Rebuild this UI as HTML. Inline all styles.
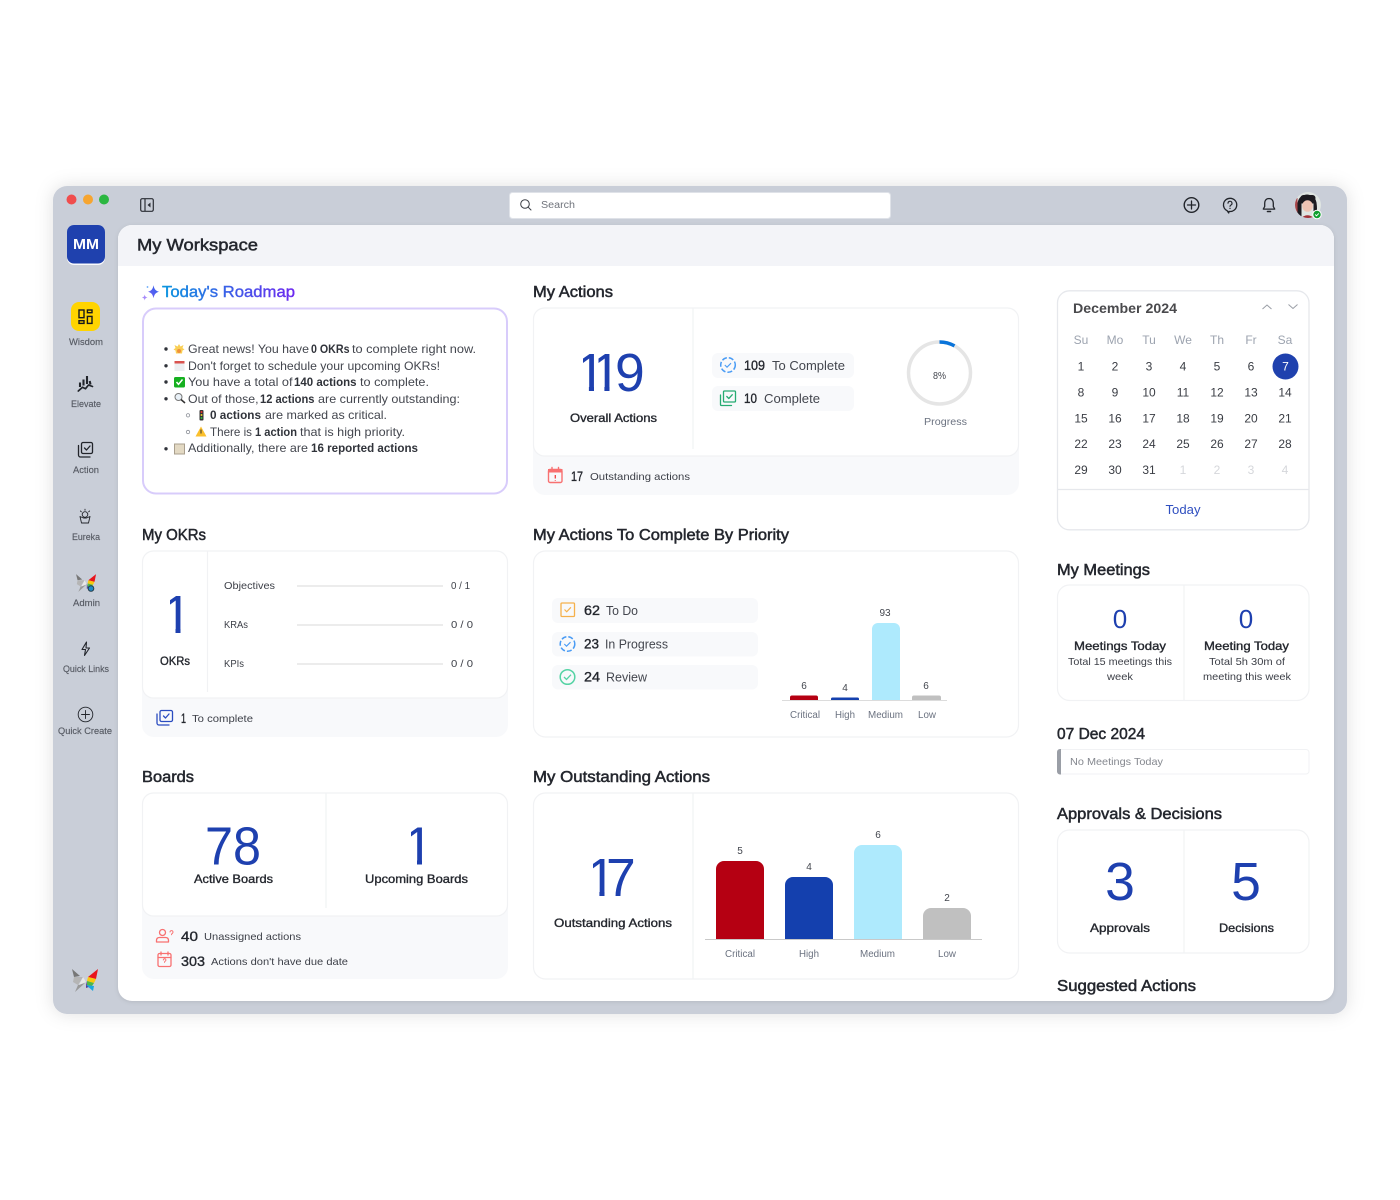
<!DOCTYPE html>
<html lang="en"><head><meta charset="utf-8"><title>My Workspace</title>
<style>
html,body{margin:0;padding:0;background:#fff;width:1400px;height:1200px;overflow:hidden}
svg{display:block}
text{font-family:"Liberation Sans",sans-serif;fill:#43464e;font-size:12px}
.m{stroke:currentColor;stroke-width:.35px;paint-order:stroke}
.h{font-size:15.5px;fill:#24272e;color:#24272e;stroke:#24272e;stroke-width:.5px}
.s{font-size:10.5px;fill:#3c3f47}
.b{font-weight:700;fill:#30333a}
.side{font-size:9.5px;fill:#565a63;stroke:#565a63;stroke-width:.15px}
.big{fill:#1e40af;font-size:53.5px}
.n{font-size:13.5px;fill:#24272e;stroke:#24272e;stroke-width:.35px}
.g{font-size:10px;fill:#6b7280}
.c{font-size:12px;text-anchor:middle;fill:#3a3d44}
.w{font-size:12px;text-anchor:middle;fill:#9ca3af}
.card{fill:#fff;stroke:#f1f2f4;stroke-width:1.2}
.foot{fill:#f8f9fb}
.pill{fill:#f8f9fb}
.ic{fill:none;stroke:#22252b;stroke-width:1.3;stroke-linecap:round;stroke-linejoin:round}
</style></head><body>
<svg width="1400" height="1200" viewBox="0 0 1400 1200" xmlns="http://www.w3.org/2000/svg">
<defs>
<filter id="sh" x="-5%" y="-5%" width="110%" height="110%"><feDropShadow dx="0" dy="0" stdDeviation="9" flood-color="#000" flood-opacity=".12"/></filter>
<filter id="sh2" x="-3%" y="-3%" width="106%" height="106%"><feDropShadow dx="0" dy="1" stdDeviation="2" flood-color="#000" flood-opacity=".1"/></filter>
<linearGradient id="gr" gradientUnits="userSpaceOnUse" x1="162" y1="0" x2="295" y2="0"><stop offset="0" stop-color="#0a96df"/><stop offset="1" stop-color="#6d28f0"/></linearGradient>
<linearGradient id="gs" gradientUnits="userSpaceOnUse" x1="142" y1="300" x2="160" y2="285"><stop offset="0" stop-color="#8b5cf6"/><stop offset="1" stop-color="#2563eb"/></linearGradient>
<clipPath id="panel"><rect x="118" y="225" width="1216" height="776" rx="14"/></clipPath>
<clipPath id="av"><circle cx="1308" cy="205" r="13"/></clipPath>
<g id="logo">
<polygon points="72,969 80,976 74,977" fill="#777"/><polygon points="74,977 83,977 78,985 73,982" fill="#b5b5b5"/><polygon points="78,985 85,983 75,992" fill="#999"/><polygon points="83,977 86,982 79,985" fill="#e8e8e8"/>
<polygon points="98,969 88,977 96,979" fill="#e8141c"/><polygon points="88,977 96,979 94,983 87,981" fill="#f9c80e"/><polygon points="87,981 94,983 92,986 87,985" fill="#4fb848"/><polygon points="86,981 87,985 92,986 86,988" fill="#5b3a98"/><polygon points="86,985 94,986 93,991" fill="#1aa7e0"/>
</g>
</defs>
<rect x="53" y="186" width="1294" height="828" rx="14" fill="#c9ced8" filter="url(#sh)"/>
<circle cx="71.5" cy="199.5" r="5" fill="#f04d4d"/><circle cx="88" cy="199.5" r="5" fill="#f6a530"/><circle cx="104" cy="199.5" r="5" fill="#2bb741"/>
<rect x="140.7" y="198.7" width="12.6" height="12.6" rx="1.5" fill="none" stroke="#2b2e35" stroke-width="1.2"/><line x1="145" y1="199" x2="145" y2="211" stroke="#2b2e35" stroke-width="1.2"/><polygon points="150.5,202.5 147.5,205 150.5,207.5" fill="#2b2e35"/>
<rect x="509.5" y="192.5" width="381" height="26" rx="3" fill="#fff" stroke="#dfe2e8"/>
<circle cx="525" cy="204" r="4.3" class="ic" style="stroke-width:1;stroke:#3a3d44"/><line x1="528.3" y1="207.3" x2="531" y2="210" class="ic" style="stroke-width:1;stroke:#3a3d44"/>
<text x="541" y="208" textLength="34" lengthAdjust="spacingAndGlyphs" style="font-size:10px;fill:#70747c">Search</text>
<circle cx="1191.5" cy="205" r="7.3" class="ic" style="stroke-width:1.4"/><path d="M1191.5 201v8M1187.500 205h8" class="ic"/>
<path d="M1230 198.3a6.6 6.6 0 1 1-1 13.1l-.3 1.6-1.4-2.1a6.6 6.6 0 0 1 2.7-12.6z" class="ic"/><path d="M1228 203.3a2 2 0 1 1 2.8 1.8c-.6.3-.8.7-.8 1.3" class="ic" style="stroke-width:1.1"/><circle cx="1230" cy="208.4" r=".7" fill="#22252b"/>
<path d="M1269 198.5c-2.7 0-4.3 2-4.3 4.6v3.4l-1.4 2.6h11.4l-1.4-2.6v-3.4c0-2.6-1.6-4.6-4.3-4.6z" class="ic"/><path d="M1267.5 211.5h3" class="ic" style="stroke-width:1.6"/>
<g clip-path="url(#av)"><rect x="1295" y="192" width="26" height="26" fill="#dfe5e2"/><path d="M1298 217q-2-8-.5-14 1.500-8 9.500-8.500 8 .5 9.500 8 1 7 0 12l-3 1v-12h-12v13z" fill="#1c1a20"/><rect x="1300.500" y="195" width="15" height="6" rx="3" fill="#1c1a20"/><ellipse cx="1307.500" cy="206" rx="5.300" ry="5.800" fill="#efc4b4"/><path d="M1300 219q7.500-7.500 15 0z" fill="#a23238"/><rect x="1295" y="198" width="2.500" height="17" fill="#a8464a"/></g>
<circle cx="1317" cy="214.5" r="4.2" fill="#0fa02f" stroke="#fff" stroke-width="1"/><path d="M1315.2 214.5l1.3 1.3 2.3-2.4" fill="none" stroke="#fff" stroke-width=".9"/>
<rect x="67" y="225" width="38" height="40" rx="7" fill="#fff" opacity=".9"/><rect x="67" y="225" width="38" height="38.5" rx="7" fill="#1f41ae"/>
<text x="73" y="249" textLength="26" lengthAdjust="spacingAndGlyphs" font-weight="700" style="font-size:15px;fill:#fff">MM</text>
<rect x="71" y="302" width="29" height="29" rx="8" fill="#ffd400"/>
<g fill="none" stroke="#16181c" stroke-width="1.400"><rect x="79" y="310" width="5" height="7.700"/><rect x="87.400" y="310" width="4.600" height="2.700"/><rect x="79" y="320.700" width="5" height="2.700"/><rect x="87.400" y="316.400" width="4.600" height="7"/></g>
<text x="69" y="345" textLength="34" lengthAdjust="spacingAndGlyphs" class="side">Wisdom</text>
<path d="M80 387v-4.500M83.500 385.500v-6M87 384v-8M90.500 384.500l-.8-3.500" class="ic" style="stroke-width:2.100;stroke-linecap:butt"/><path d="M78.300 391l4.200-3.800 3 1.500 3-3.700 4 1.500" class="ic" style="stroke-width:1.700"/>
<text x="71" y="407" textLength="30" lengthAdjust="spacingAndGlyphs" class="side">Elevate</text>
<rect x="81.5" y="442.5" width="11" height="11" rx="1.5" class="ic"/><path d="M78.5 445.5v9.5a2 2 0 0 0 2 2h9.5" class="ic"/><path d="M84.5 448l2 2 3.5-4" class="ic"/>
<text x="73" y="473" textLength="26" lengthAdjust="spacingAndGlyphs" class="side">Action</text>
<circle cx="85" cy="514.500" r="2.800" class="ic" style="stroke-width:.9"/><path d="M80 516.500l1.500 6.500h7l1.500-6.500-3.500 1.500h-3z" class="ic" style="stroke-width:.9"/><path d="M85 509.200v1M80.500 511l.8.8M89.500 511l-.8.8" class="ic" style="stroke-width:.9"/>
<text x="72" y="540" textLength="28" lengthAdjust="spacingAndGlyphs" class="side">Eureka</text>
<use href="#logo" transform="translate(20.600 -172) scale(.77)"/><circle cx="91" cy="588.500" r="2.800" fill="#1d8ac8" stroke="#263e4a" stroke-width="1"/>
<text x="73" y="606" textLength="27" lengthAdjust="spacingAndGlyphs" class="side">Admin</text>
<path d="M86.500 642l-4.500 7.500h3.500l-1 6 5-7.500h-3.500z" class="ic" style="stroke-width:1.100"/>
<text x="63" y="672" textLength="46" lengthAdjust="spacingAndGlyphs" class="side">Quick Links</text>
<circle cx="85.5" cy="714.5" r="7.3" class="ic" style="stroke-width:.9"/><path d="M85.5 710.5v8M81.5 714.5h8" class="ic" style="stroke-width:.9"/>
<text x="58" y="734" textLength="54" lengthAdjust="spacingAndGlyphs" class="side">Quick Create</text>
<use href="#logo"/>

<rect x="118" y="225" width="1216" height="776" rx="14" fill="#fff" filter="url(#sh2)"/>
<g clip-path="url(#panel)">
<rect x="118" y="225" width="1216" height="41" fill="#f3f4f8"/>
<text x="137" y="250.5" textLength="121" lengthAdjust="spacingAndGlyphs" class="h" style="font-size:17px">My Workspace</text>

<path transform="translate(1.500 .800) " d="M152 284.500c.8 4 2 5.500 5.500 6.500-3.500 1-4.700 2.500-5.500 6.500-.8-4-2-5.500-5.500-6.500 3.500-1 4.700-2.500 5.500-6.500z" fill="url(#gs)"/><circle cx="147.500" cy="287" r=".9" fill="#60a5fa"/><path d="M144.700 294.500c.4 2 .9 2.500 2.800 3-1.900.5-2.400 1-2.800 3-.4-2-.9-2.500-2.800-3 1.900-.5 2.400-1 2.800-3z" fill="#a78bfa"/>
<text x="162" y="297" textLength="133" lengthAdjust="spacingAndGlyphs" style="font-size:16px;fill:url(#gr);stroke:url(#gr);stroke-width:.4px">Today's Roadmap</text>
<rect x="143" y="308.500" width="364" height="185" rx="13" fill="#fff" stroke="#d8ccfb" stroke-width="2"/>
<g fill="#30333a"><circle cx="166" cy="349" r="1.700"/><circle cx="166" cy="365.800" r="1.700"/><circle cx="166" cy="382" r="1.700"/><circle cx="166" cy="398.800" r="1.700"/><circle cx="166" cy="448.800" r="1.700"/></g>
<circle cx="188" cy="415.300" r="1.700" fill="none" stroke="#8b8f97" stroke-width=".8"/><circle cx="188" cy="432" r="1.700" fill="none" stroke="#8b8f97" stroke-width=".8"/>
<path d="M179 344l1.500 2.500 3-1.500-1 3 2 1.500-2 1-.5 3h-6l-.5-3-2-1 2-1.500-1-3 3 1.500z" fill="#f9cf55"/><circle cx="179" cy="351" r="2" fill="#f0913a"/>
<rect x="174.500" y="361" width="10" height="10" fill="#eceef1"/><rect x="174.500" y="361" width="10" height="2.500" fill="#d9534f"/>
<rect x="174" y="377" width="11" height="10.500" rx="1.500" fill="#16b020"/><path d="M176.500 382l2 2.300 4-4.800" fill="none" stroke="#fff" stroke-width="1.500"/>
<circle cx="178.500" cy="397" r="3.500" fill="#e9f1f8" stroke="#777" stroke-width="1"/><line x1="181" y1="399.500" x2="185" y2="403" stroke="#333" stroke-width="1.500"/>
<rect x="199.500" y="410" width="4" height="10.500" rx="1" fill="#333"/><circle cx="201.500" cy="412" r="1" fill="#e33"/><circle cx="201.500" cy="415" r="1" fill="#ec3"/><circle cx="201.500" cy="418" r="1" fill="#3b4"/>
<polygon points="201,426.500 206.500,436.500 195.500,436.500" fill="#fbc02d"/><rect x="200.500" y="429.500" width="1" height="4" fill="#333"/>
<rect x="174.500" y="444" width="10" height="10" fill="#e3d9c3" stroke="#a99f8e"/>
<text x="188" y="353" textLength="121" lengthAdjust="spacingAndGlyphs">Great news! You have</text><text x="311" y="353" textLength="38.500" lengthAdjust="spacingAndGlyphs" class="b">0 OKRs</text><text x="352" y="353" textLength="124" lengthAdjust="spacingAndGlyphs">to complete right now.</text>
<text x="188" y="370" textLength="252" lengthAdjust="spacingAndGlyphs">Don't forget to schedule your upcoming OKRs!</text>
<text x="188" y="386" textLength="104.500" lengthAdjust="spacingAndGlyphs">You have a total of</text><text x="294" y="386" textLength="62.500" lengthAdjust="spacingAndGlyphs" class="b">140 actions</text><text x="360" y="386" textLength="69" lengthAdjust="spacingAndGlyphs">to complete.</text>
<text x="188" y="403" textLength="70.500" lengthAdjust="spacingAndGlyphs">Out of those,</text><text x="260" y="403" textLength="54.500" lengthAdjust="spacingAndGlyphs" class="b">12 actions</text><text x="318" y="403" textLength="142" lengthAdjust="spacingAndGlyphs">are currently outstanding:</text>
<text x="210" y="419" textLength="51" lengthAdjust="spacingAndGlyphs" class="b">0 actions</text><text x="265" y="419" textLength="122" lengthAdjust="spacingAndGlyphs">are marked as critical.</text>
<text x="210" y="436" textLength="42" lengthAdjust="spacingAndGlyphs">There is</text><text x="255" y="436" textLength="42" lengthAdjust="spacingAndGlyphs" class="b">1 action</text><text x="300" y="436" textLength="105" lengthAdjust="spacingAndGlyphs">that is high priority.</text>
<text x="188" y="452" textLength="120" lengthAdjust="spacingAndGlyphs">Additionally, there are</text><text x="311" y="452" textLength="107" lengthAdjust="spacingAndGlyphs" class="b">16 reported actions</text>

<text x="142" y="540" textLength="64" lengthAdjust="spacingAndGlyphs" class="h">My OKRs</text>
<rect x="142" y="551" width="366" height="186" rx="12" class="foot"/><rect x="142.500" y="551" width="365" height="147" rx="11" class="card"/>
<line x1="207.500" y1="551" x2="207.500" y2="692" stroke="#f1f2f4" stroke-width="1.200"/>
<text x="162.200" y="633" class="big">1</text><rect x="160" y="590" width="10" height="44" fill="#fff"/><rect x="165" y="628.400" width="10.500" height="5.600" fill="#fff"/><rect x="180.500" y="628.400" width="10.500" height="5.600" fill="#fff"/>
<text x="160" y="665" textLength="30" lengthAdjust="spacingAndGlyphs" class="m" style="color:#24272e;fill:#24272e">OKRs</text>
<text x="224" y="589" textLength="51" lengthAdjust="spacingAndGlyphs" class="s">Objectives</text><line x1="297" y1="586" x2="443" y2="586" stroke="#e5e5e5" stroke-width="1.500"/><text x="451" y="589" textLength="19" lengthAdjust="spacingAndGlyphs" class="s">0 / 1</text>
<text x="224" y="628" textLength="24" lengthAdjust="spacingAndGlyphs" class="s">KRAs</text><line x1="297" y1="625" x2="443" y2="625" stroke="#e5e5e5" stroke-width="1.500"/><text x="451" y="628" textLength="22" lengthAdjust="spacingAndGlyphs" class="s">0 / 0</text>
<text x="224" y="667" textLength="20" lengthAdjust="spacingAndGlyphs" class="s">KPIs</text><line x1="297" y1="664" x2="443" y2="664" stroke="#e5e5e5" stroke-width="1.500"/><text x="451" y="667" textLength="22" lengthAdjust="spacingAndGlyphs" class="s">0 / 0</text>
<g fill="none" stroke="#2a4cc0" stroke-width="1.300" stroke-linejoin="round" stroke-linecap="round"><rect x="160" y="710.500" width="12.500" height="11" rx="1.500"/><path d="M157 714v9a2 2 0 0 0 2 2h10"/><path d="M163.500 716l2 2 3.500-4"/></g>
<text x="181" y="723" textLength="5" lengthAdjust="spacingAndGlyphs" class="n">1</text><text x="192" y="722" textLength="61" lengthAdjust="spacingAndGlyphs" class="s">To complete</text>

<text x="142" y="782" textLength="52" lengthAdjust="spacingAndGlyphs" class="h">Boards</text>
<rect x="142" y="793" width="366" height="186" rx="12" class="foot"/><rect x="142.500" y="793" width="365" height="123" rx="11" class="card"/>
<line x1="326" y1="793" x2="326" y2="908" stroke="#f1f2f4" stroke-width="1.200"/>
<text x="205" y="864.500" textLength="56" lengthAdjust="spacingAndGlyphs" class="big">78</text>
<text x="194" y="883" textLength="79" lengthAdjust="spacingAndGlyphs" class="m" style="color:#24272e;fill:#24272e">Active Boards</text>
<text x="403.700" y="864.500" class="big">1</text><rect x="401" y="822" width="10" height="44" fill="#fff"/><rect x="406.500" y="859.900" width="10.500" height="5.600" fill="#fff"/><rect x="422" y="859.900" width="10.500" height="5.600" fill="#fff"/>
<text x="365" y="883" textLength="103" lengthAdjust="spacingAndGlyphs" class="m" style="color:#24272e;fill:#24272e">Upcoming Boards</text>
<g fill="none" stroke="#f87171" stroke-width="1.300" stroke-linecap="round" stroke-linejoin="round"><circle cx="162.500" cy="932.500" r="3"/><path d="M156.500 942v-1.500q0-3 3-3h6q3 0 3 3v1.500z"/><path d="M170 932a1.500 1.500 0 1 1 2.500 1.200q-1 .6-1 1.600" stroke-width="1"/><rect x="158" y="953.500" width="13" height="13" rx="1.500"/><path d="M158 957.500h13M161 952v3M168 952v3"/><path d="M163.300 960a1.300 1.300 0 1 1 2 1.100q-.8.400-.8 1.300" stroke-width="1"/></g>
<text x="181" y="941" textLength="17" lengthAdjust="spacingAndGlyphs" class="n">40</text><text x="204" y="940" textLength="97" lengthAdjust="spacingAndGlyphs" class="s">Unassigned actions</text>
<text x="181" y="966" textLength="24" lengthAdjust="spacingAndGlyphs" class="n">303</text><text x="211" y="965" textLength="137" lengthAdjust="spacingAndGlyphs" class="s">Actions don't have due date</text>

<text x="533" y="297" textLength="80" lengthAdjust="spacingAndGlyphs" class="h">My Actions</text>
<rect x="533" y="308" width="486" height="187" rx="12" class="foot"/><rect x="533.500" y="308" width="485" height="148" rx="11" class="card"/>
<line x1="693" y1="308" x2="693" y2="449" stroke="#f1f2f4" stroke-width="1.200"/>
<text x="575.700" y="391" class="big">1</text><rect x="573" y="348" width="10" height="44" fill="#fff"/><rect x="578.500" y="386.400" width="10.400" height="5.600" fill="#fff"/><rect x="594" y="386.400" width="10.400" height="5.600" fill="#fff"/>
<text x="591.200" y="391" class="big">1</text><rect x="594" y="348" width="4.500" height="44" fill="#fff"/><rect x="594" y="386.400" width="10.400" height="5.600" fill="#fff"/><rect x="609.500" y="386.400" width="10.400" height="5.600" fill="#fff"/>
<text x="615" y="391" class="big">9</text>
<text x="570" y="422" textLength="87" lengthAdjust="spacingAndGlyphs" class="m" style="color:#24272e;fill:#24272e">Overall Actions</text>
<rect x="712" y="353" width="142" height="25" rx="6" class="pill"/><rect x="712" y="386" width="142" height="25" rx="6" class="pill"/>
<circle cx="728" cy="365" r="7.300" fill="none" stroke="#4a9cf5" stroke-width="1.500" stroke-dasharray="5 2"/><path d="M724.800 365l2.200 2.200 4-4" fill="none" stroke="#4a9cf5" stroke-width="1.100"/>
<g fill="none" stroke="#26ab72" stroke-width="1.300" stroke-linecap="round" stroke-linejoin="round"><rect x="723.500" y="391" width="12" height="11" rx="1"/><path d="M720.500 395v9.500a1 1 0 0 0 1 1h10"/><path d="M726.800 396.500l2 2 3.500-3.800"/></g>
<text x="744" y="370" textLength="21" lengthAdjust="spacingAndGlyphs" class="n">109</text><text x="772" y="370" textLength="73" lengthAdjust="spacingAndGlyphs" style="font-size:12.500px">To Complete</text>
<text x="744" y="403" textLength="13" lengthAdjust="spacingAndGlyphs" class="n">10</text><text x="764" y="403" textLength="56" lengthAdjust="spacingAndGlyphs" style="font-size:12.500px">Complete</text>
<circle cx="939.500" cy="373" r="31" fill="none" stroke="#e5e5e5" stroke-width="3.500"/><path d="M939.500 342a31 31 0 0 1 15 3.900" fill="none" stroke="#0a74da" stroke-width="3.500"/>
<text x="933" y="379" textLength="13" lengthAdjust="spacingAndGlyphs" style="font-size:10px">8%</text><text x="924" y="425" textLength="43" lengthAdjust="spacingAndGlyphs" class="g">Progress</text>
<g fill="none" stroke="#f87171" stroke-width="1.400" stroke-linecap="round"><rect x="548.500" y="469.500" width="13.500" height="13" rx="1.500"/><path d="M552 467.500v3M558.500 467.500v3"/></g><rect x="548" y="469" width="14.500" height="3.500" fill="#f87171"/><path d="M555.300 475v3.500M555.300 480v.6" stroke="#ef4444" stroke-width="1.300" fill="none"/>
<text x="571" y="481" textLength="12" lengthAdjust="spacingAndGlyphs" class="n">17</text><text x="590" y="480" textLength="100" lengthAdjust="spacingAndGlyphs" class="s">Outstanding actions</text>

<text x="533" y="540" textLength="256" lengthAdjust="spacingAndGlyphs" class="h">My Actions To Complete By Priority</text>
<rect x="533.500" y="551" width="485" height="186" rx="12" class="card"/>
<rect x="552" y="598" width="206" height="25" rx="6" class="pill"/><rect x="552" y="632" width="206" height="24.500" rx="6" class="pill"/><rect x="552" y="665" width="206" height="24.500" rx="6" class="pill"/>
<rect x="561" y="603" width="13.500" height="13.500" rx="1" fill="none" stroke="#f5b14c" stroke-width="1.300"/><path d="M564.500 609.500l2.200 2.300 4.200-4.500" fill="none" stroke="#f5b14c" stroke-width="1.200"/>
<circle cx="567.500" cy="644" r="7.300" fill="none" stroke="#4a9cf5" stroke-width="1.500" stroke-dasharray="5 2"/><path d="M564.300 644l2.200 2.200 4-4" fill="none" stroke="#4a9cf5" stroke-width="1.100"/>
<circle cx="567.500" cy="677" r="7.300" fill="none" stroke="#55d3a4" stroke-width="1.500"/><path d="M564 677l2.500 2.500 4.500-4.800" fill="none" stroke="#55d3a4" stroke-width="1.300"/>
<text x="584" y="615" textLength="16" lengthAdjust="spacingAndGlyphs" class="n">62</text><text x="606" y="615" textLength="32" lengthAdjust="spacingAndGlyphs" style="font-size:12.500px">To Do</text>
<text x="584" y="648.500" textLength="15" lengthAdjust="spacingAndGlyphs" class="n">23</text><text x="605" y="648.500" textLength="63" lengthAdjust="spacingAndGlyphs" style="font-size:12.500px">In Progress</text>
<text x="584" y="681.500" textLength="16" lengthAdjust="spacingAndGlyphs" class="n">24</text><text x="606" y="681.500" textLength="41" lengthAdjust="spacingAndGlyphs" style="font-size:12.500px">Review</text>
<path d="M790 700v-2.500a2 2 0 0 1 2-2h24a2 2 0 0 1 2 2v2.500z" fill="#b50012"/><path d="M831 700v-1a1.500 1.500 0 0 1 1.500-1.500h25a1.500 1.500 0 0 1 1.500 1.500v1z" fill="#1440ae"/><path d="M872 700v-71a6 6 0 0 1 6-6h16a6 6 0 0 1 6 6v71z" fill="#aeeafd"/><path d="M912 700v-2.500a2 2 0 0 1 2-2h25a2 2 0 0 1 2 2v2.500z" fill="#c0c0c0"/>
<line x1="782" y1="700.500" x2="947" y2="700.500" stroke="#dcdcdc"/>
<g style="font-size:10px" text-anchor="middle"><text x="804" y="689" style="font-size:10px">6</text><text x="845" y="691" style="font-size:10px">4</text><text x="885" y="616" style="font-size:10px">93</text><text x="926" y="689" style="font-size:10px">6</text></g>
<text x="790" y="718" textLength="30" lengthAdjust="spacingAndGlyphs" class="g">Critical</text><text x="835" y="718" textLength="20" lengthAdjust="spacingAndGlyphs" class="g">High</text><text x="868" y="718" textLength="35" lengthAdjust="spacingAndGlyphs" class="g">Medium</text><text x="918" y="718" textLength="18" lengthAdjust="spacingAndGlyphs" class="g">Low</text>

<text x="533" y="782" textLength="177" lengthAdjust="spacingAndGlyphs" class="h">My Outstanding Actions</text>
<rect x="533.500" y="793" width="485" height="186" rx="12" class="card"/>
<line x1="693" y1="793" x2="693" y2="979" stroke="#f1f2f4" stroke-width="1.200"/>
<text x="586.200" y="896" class="big">1</text><rect x="584" y="853" width="9" height="44" fill="#fff"/><rect x="589" y="891.400" width="10.400" height="5.600" fill="#fff"/><rect x="604.500" y="891.400" width="10.400" height="5.600" fill="#fff"/>
<text x="606" y="896" class="big">7</text>
<text x="554" y="927" textLength="118" lengthAdjust="spacingAndGlyphs" class="m" style="color:#24272e;fill:#24272e">Outstanding Actions</text>
<path d="M716 939v-70a8 8 0 0 1 8-8h32a8 8 0 0 1 8 8v70z" fill="#b50012"/><path d="M785 939v-54a8 8 0 0 1 8-8h32a8 8 0 0 1 8 8v54z" fill="#1440ae"/><path d="M854 939v-86a8 8 0 0 1 8-8h32a8 8 0 0 1 8 8v86z" fill="#aeeafd"/><path d="M923 939v-23a8 8 0 0 1 8-8h32a8 8 0 0 1 8 8v23z" fill="#c0c0c0"/>
<line x1="705" y1="939.500" x2="982" y2="939.500" stroke="#c9c9c9"/>
<g text-anchor="middle"><text x="740" y="854" style="font-size:10px">5</text><text x="809" y="870" style="font-size:10px">4</text><text x="878" y="838" style="font-size:10px">6</text><text x="947" y="901" style="font-size:10px">2</text></g>
<text x="725" y="957" textLength="30" lengthAdjust="spacingAndGlyphs" class="g">Critical</text><text x="799" y="957" textLength="20" lengthAdjust="spacingAndGlyphs" class="g">High</text><text x="860" y="957" textLength="35" lengthAdjust="spacingAndGlyphs" class="g">Medium</text><text x="938" y="957" textLength="18" lengthAdjust="spacingAndGlyphs" class="g">Low</text>

<rect x="1057.500" y="290.800" width="251.500" height="239" rx="12" fill="#fff" stroke="#e6e8ec" stroke-width="1.300"/>
<text x="1073" y="313" textLength="104" lengthAdjust="spacingAndGlyphs" font-weight="700" style="font-size:14px;fill:#4a4a4d">December 2024</text>
<path d="M1262.500 309l4.500-4 4.500 4M1288.500 304.500l4.500 4 4.500-4" fill="none" stroke="#9a9ea6" stroke-width="1"/>
<g>
<text class="w" x="1081" y="344">Su</text><text class="w" x="1115" y="344">Mo</text><text class="w" x="1149" y="344">Tu</text><text class="w" x="1183" y="344">We</text><text class="w" x="1217" y="344">Th</text><text class="w" x="1251" y="344">Fr</text><text class="w" x="1285" y="344">Sa</text>
<circle cx="1285.500" cy="366.500" r="13" fill="#1f41ae"/>
<text class="c" x="1081" y="370.500">1</text><text class="c" x="1115" y="370.500">2</text><text class="c" x="1149" y="370.500">3</text><text class="c" x="1183" y="370.500">4</text><text class="c" x="1217" y="370.500">5</text><text class="c" x="1251" y="370.500">6</text><text class="c" x="1285.500" y="370.500" style="fill:#fff">7</text>
<text class="c" x="1081" y="396.500">8</text><text class="c" x="1115" y="396.500">9</text><text class="c" x="1149" y="396.500">10</text><text class="c" x="1183" y="396.500">11</text><text class="c" x="1217" y="396.500">12</text><text class="c" x="1251" y="396.500">13</text><text class="c" x="1285" y="396.500">14</text>
<text class="c" x="1081" y="422.500">15</text><text class="c" x="1115" y="422.500">16</text><text class="c" x="1149" y="422.500">17</text><text class="c" x="1183" y="422.500">18</text><text class="c" x="1217" y="422.500">19</text><text class="c" x="1251" y="422.500">20</text><text class="c" x="1285" y="422.500">21</text>
<text class="c" x="1081" y="448">22</text><text class="c" x="1115" y="448">23</text><text class="c" x="1149" y="448">24</text><text class="c" x="1183" y="448">25</text><text class="c" x="1217" y="448">26</text><text class="c" x="1251" y="448">27</text><text class="c" x="1285" y="448">28</text>
<text class="c" x="1081" y="474">29</text><text class="c" x="1115" y="474">30</text><text class="c" x="1149" y="474">31</text><text class="c" x="1183" y="474" style="fill:#d5d7db">1</text><text class="c" x="1217" y="474" style="fill:#d5d7db">2</text><text class="c" x="1251" y="474" style="fill:#d5d7db">3</text><text class="c" x="1285" y="474" style="fill:#d5d7db">4</text>
</g>
<line x1="1057.500" y1="489.500" x2="1309" y2="489.500" stroke="#e6e8ec" stroke-width="1.200"/>
<text x="1165.500" y="514" textLength="35" lengthAdjust="spacingAndGlyphs" style="font-size:12.500px;fill:#2f4fc0">Today</text>

<text x="1057" y="575" textLength="93" lengthAdjust="spacingAndGlyphs" class="h">My Meetings</text>
<rect x="1057.500" y="585" width="251.500" height="115.500" rx="12" class="card"/><line x1="1184" y1="585" x2="1184" y2="700" stroke="#f1f2f4" stroke-width="1.200"/>
<text x="1120" y="628" text-anchor="middle" class="big" style="font-size:26px">0</text><text x="1246" y="628" text-anchor="middle" class="big" style="font-size:26px">0</text>
<text x="1074" y="650" textLength="92" lengthAdjust="spacingAndGlyphs" class="m" style="color:#24272e;fill:#24272e">Meetings Today</text><text x="1068" y="665" textLength="104" lengthAdjust="spacingAndGlyphs" class="s">Total 15 meetings this</text><text x="1107" y="680" textLength="26" lengthAdjust="spacingAndGlyphs" class="s">week</text>
<text x="1204" y="650" textLength="85" lengthAdjust="spacingAndGlyphs" class="m" style="color:#24272e;fill:#24272e">Meeting Today</text><text x="1209" y="665" textLength="76" lengthAdjust="spacingAndGlyphs" class="s">Total 5h 30m of</text><text x="1203" y="680" textLength="88" lengthAdjust="spacingAndGlyphs" class="s">meeting this week</text>

<text x="1057" y="739" textLength="88" lengthAdjust="spacingAndGlyphs" class="h">07 Dec 2024</text>
<rect x="1057.500" y="749.500" width="251.500" height="24.500" rx="3" fill="#fff" stroke="#f1f2f4"/><path d="M1060 749h1v25.500h-1a3 3 0 0 1-3-3v-19.500a3 3 0 0 1 3-3z" fill="#9a9ea6"/>
<text x="1070" y="765" textLength="93" lengthAdjust="spacingAndGlyphs" style="font-size:10.500px;fill:#85888f">No Meetings Today</text>

<text x="1057" y="819" textLength="165" lengthAdjust="spacingAndGlyphs" class="h">Approvals &amp; Decisions</text>
<rect x="1057.500" y="830" width="251.500" height="123" rx="12" class="card"/><line x1="1184" y1="830" x2="1184" y2="953" stroke="#f1f2f4" stroke-width="1.200"/>
<text x="1120" y="900" text-anchor="middle" class="big">3</text><text x="1246" y="900" text-anchor="middle" class="big">5</text>
<text x="1090" y="932" textLength="60" lengthAdjust="spacingAndGlyphs" class="m" style="color:#24272e;fill:#24272e">Approvals</text><text x="1219" y="932" textLength="55" lengthAdjust="spacingAndGlyphs" class="m" style="color:#24272e;fill:#24272e">Decisions</text>

<text x="1057" y="991" textLength="139" lengthAdjust="spacingAndGlyphs" class="h">Suggested Actions</text>
</g>
</svg>
</body></html>
